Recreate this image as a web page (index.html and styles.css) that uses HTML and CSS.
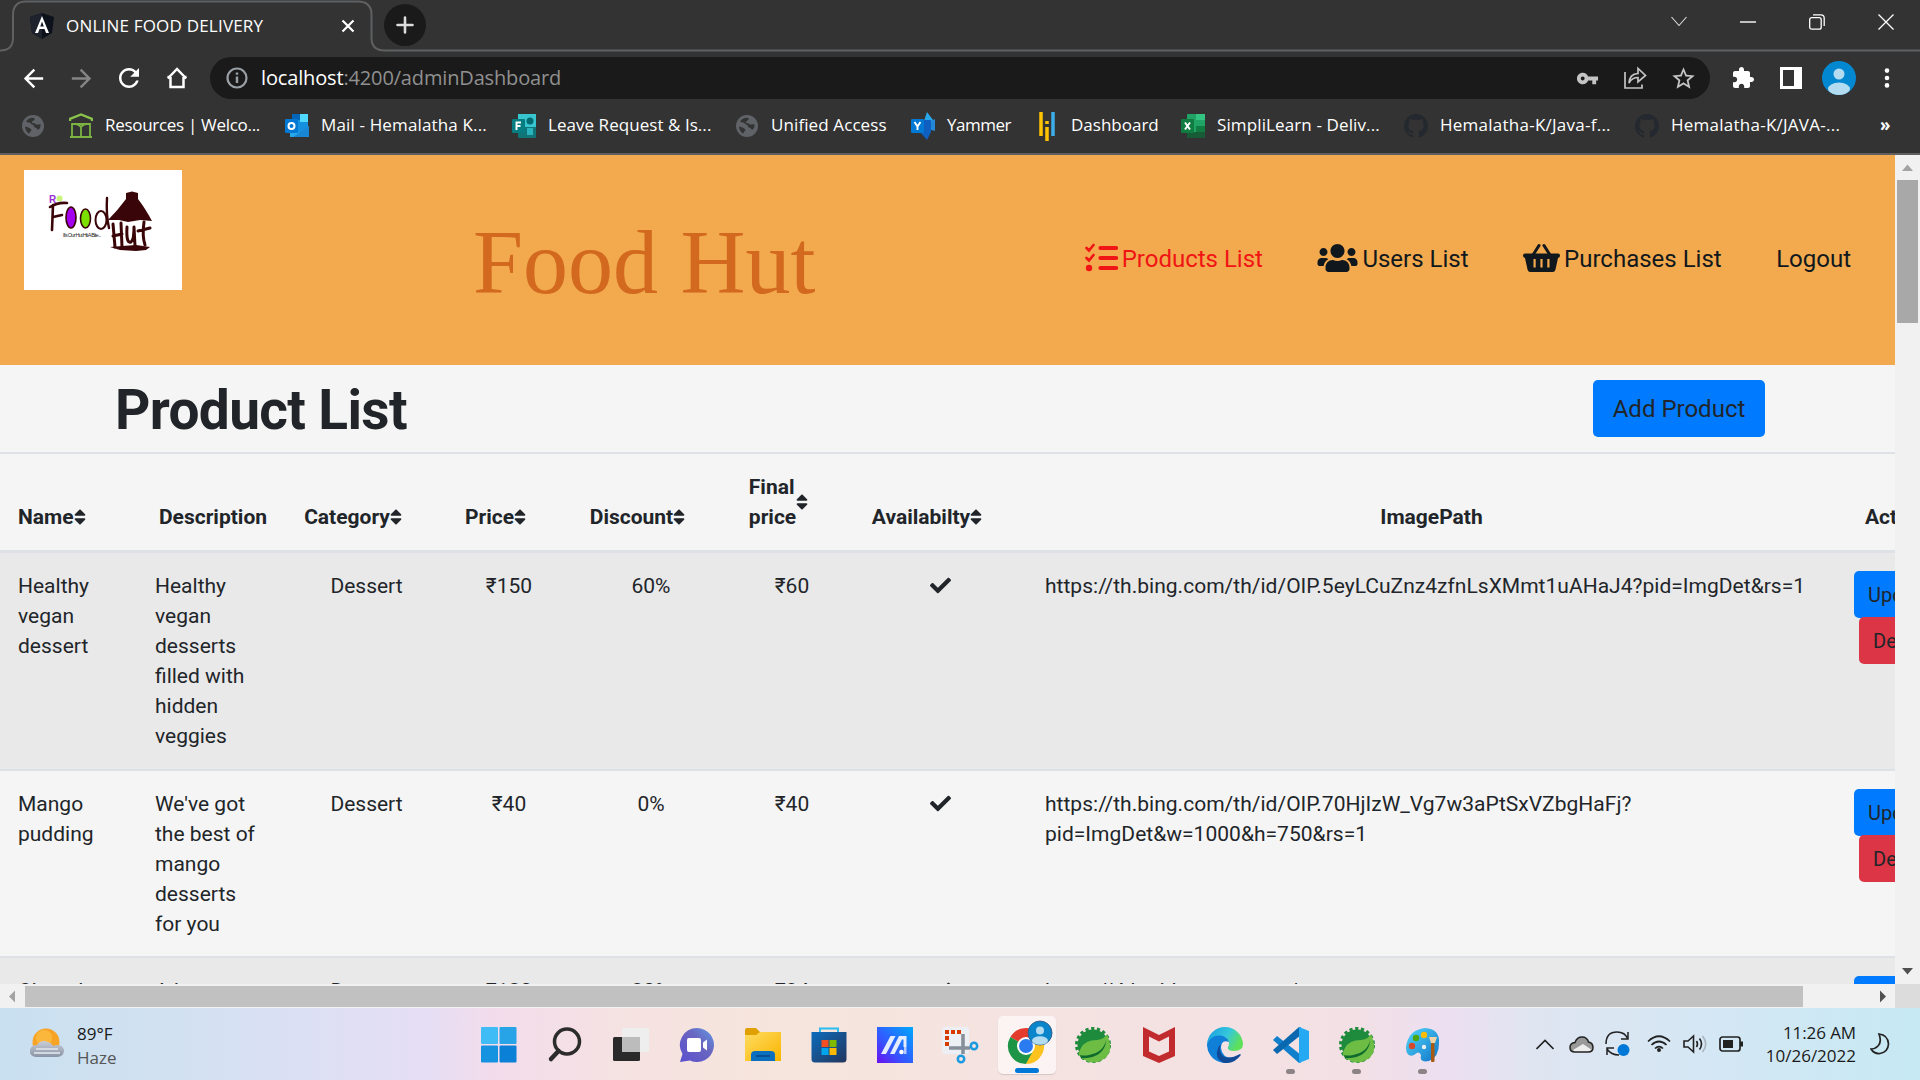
FILE: index.html
```html
<!DOCTYPE html>
<html lang="en">
<head>
<meta charset="utf-8">
<title>ONLINE FOOD DELIVERY</title>
<link rel="stylesheet" href="styles.css">
</head>
<body>
<svg class="defs" width="0" height="0">
  <defs>
    <symbol id="sort" viewBox="0 0 320 512"><path d="M41 288h238c21.4 0 32.1 25.9 17 41L177 448c-9.4 9.4-24.6 9.4-33.9 0L24 329c-15.1-15.1-4.4-41 17-41zm255-105L177 64c-9.4-9.4-24.6-9.4-33.9 0L24 183c-15.1 15.1-4.4 41 17 41h238c21.4 0 32.1-25.9 17-41z"/></symbol>
    <symbol id="check" viewBox="0 0 512 512"><path d="M173.898 439.404l-166.4-166.4c-9.997-9.997-9.997-26.206 0-36.204l36.203-36.204c9.997-9.998 26.207-9.998 36.204 0L192 312.69 432.095 72.596c9.997-9.997 26.207-9.997 36.204 0l36.203 36.204c9.997 9.997 9.997 26.206 0 36.204l-294.4 294.401c-9.998 9.997-26.207 9.997-36.204-.001z"/></symbol>
    <symbol id="globe" viewBox="0 0 22 22"><circle cx="11" cy="11" r="11" fill="#5f6368"/><path d="M4 6.500q3.500-4.500 8-3.500q1.500 1.500-.5 2.500q-2 .5-1.500 2.500q3-.5 4 1.500q2 0 4.500-.5q.5 3-1.500 5.500q-2 .5-2.500-1.500q-2.500 0-3-3q-2.500-.5-3.500-2.500q-2 .5-4-1z" fill="#333" /><path d="M3 11.500q4 .5 6 2.500q1 2-1 2.500q0 2-1 2q-3.500-2-4-7z" fill="#333"/></symbol>
    <symbol id="octocat" viewBox="0 0 16 16"><path fill="#24292f" d="M8 0C3.58 0 0 3.580 0 8c0 3.540 2.290 6.530 5.470 7.590.4.070.550-.170.550-.380 0-.190-.010-.820-.010-1.490-2.010.370-2.530-.490-2.690-.940-.090-.230-.480-.940-.820-1.130-.280-.150-.680-.520-.010-.530.630-.010 1.080.580 1.230.820.720 1.210 1.870.870 2.330.660.070-.520.280-.870.510-1.070-1.780-.200-3.640-.890-3.640-3.950 0-.870.310-1.590.820-2.150-.080-.200-.360-1.020.080-2.120 0 0 .670-.210 2.200.820.640-.180 1.320-.270 2-.270s1.360.090 2 .270c1.530-1.040 2.200-.820 2.200-.820.440 1.100.160 1.920.080 2.120.510.560.820 1.270.820 2.150 0 3.070-1.870 3.750-3.650 3.950.290.250.540.730.540 1.480 0 1.070-.010 1.930-.010 2.200 0 .210.150.460.550.380A8.010 8.010 0 0016 8c0-4.420-3.580-8-8-8z"/></symbol>
    <symbol id="spring" viewBox="0 0 36 36">
      <circle cx="18" cy="18" r="15.500" fill="#1e8a3c"/><circle cx="18" cy="18" r="16.500" fill="none" stroke="#1e8a3c" stroke-width="3" stroke-dasharray="3.200 2.600" />
      <path d="M34 13Q38 25 29 32Q18 39 8 32Q1 29 6 21Q10 13 22 13Q30 12 32 7Z" fill="#6dbd45"/>
      <path d="M31 13Q29 25 14 28Q9 29 5 28L6 31Q18 32 25 26Q31 21 31 13Z" fill="#0e6b2d"/>
    </symbol>
    <linearGradient id="gChat" x1="1" y1="0" x2="0" y2="1"><stop offset="0" stop-color="#5f9be8"/><stop offset=".4" stop-color="#6a67c0"/><stop offset="1" stop-color="#5b4fcf"/></linearGradient>
    <linearGradient id="gFold" x1="0" y1="0" x2="1" y2="1"><stop offset="0" stop-color="#ffdc62"/><stop offset="1" stop-color="#f9b400"/></linearGradient>
    <linearGradient id="gStore" x1="0" y1="0" x2="1" y2="1"><stop offset="0" stop-color="#0b6cbd"/><stop offset="1" stop-color="#24365c"/></linearGradient>
    <linearGradient id="gAsus" x1="1" y1="0" x2="0" y2="1"><stop offset="0" stop-color="#00a8ff"/><stop offset=".6" stop-color="#3456ff"/><stop offset="1" stop-color="#6a10ee"/></linearGradient>
    <linearGradient id="gEdge" x1="0" y1="0" x2="1" y2=".4"><stop offset="0" stop-color="#189be0"/><stop offset=".6" stop-color="#35c8dc"/><stop offset="1" stop-color="#5fe05a"/></linearGradient>
    <linearGradient id="gPaint" x1="0" y1="0" x2="1" y2="1"><stop offset="0" stop-color="#55d8fa"/><stop offset="1" stop-color="#0f74c8"/></linearGradient>
    <linearGradient id="gCloud" x1="0" y1="0" x2="0" y2="1"><stop offset="0" stop-color="#c9ced8"/><stop offset="1" stop-color="#8a93a5"/></linearGradient>
  </defs>
</svg>

<div class="screen">
  <header class="browser">
    <div class="tabstrip">
      <svg class="tab-outline" width="1920" height="52" fill="none" stroke="#5f6062" stroke-width="2"><path d="M0 50.500Q13 50.500 13 38V15Q13 1.500 26 1.500H358Q371.500 1.500 371.500 15V38Q371.500 50.500 385 50.500H1920"/></svg>
      <div class="tab">
        <svg width="24" height="26" viewBox="0 0 24 26"><path d="M12 0L24 4L22 20L12 26L2 20L0 4Z" fill="#0c111b"/><path d="M12 0L0 4L2 20L12 26Z" fill="#1d222c"/><path d="M12 3L5 20H8L9.500 16H14.500L16 20H19ZM12 8.500L13.800 13.500H10.200Z" fill="#fff" fill-rule="evenodd"/></svg>
        <span class="tab-title">ONLINE FOOD DELIVERY</span>
        <svg class="tab-close" width="14" height="14" stroke="#fff" stroke-width="2.200"><path d="M1.500 1.500L12.500 12.500M12.500 1.500L1.500 12.500"/></svg>
      </div>
      <div class="new-tab"><svg width="18" height="18" stroke="#dcdcdc" stroke-width="2.600" stroke-linecap="round"><path d="M9 1.500V16.500M1.500 9H16.500"/></svg></div>
      <div class="window-controls">
        <span><svg width="16" height="12" fill="none" stroke="#ddd" stroke-width="1.100"><path d="M.5 1L8 9.500L15.500 1"/></svg></span>
        <span><svg width="16" height="4" stroke="#fff" stroke-width="1.400"><path d="M0 2H16"/></svg></span>
        <span><svg width="16" height="16" fill="none" stroke="#fff" stroke-width="1.300"><rect x=".7" y="3.700" width="11.500" height="11.500" rx="2"/><path d="M4 .8H12Q15.200.8 15.200 4V12"/></svg></span>
        <span><svg width="16" height="16" stroke="#fff" stroke-width="1.300"><path d="M.5.5L15.500 15.500M15.500.5L.5 15.500"/></svg></span>
      </div>
    </div>

    <div class="toolbar">
      <span class="tool"><svg width="29" height="29" viewBox="0 0 24 24" fill="#fff"><path d="M20 11H7.830l5.590-5.590L12 4l-8 8 8 8 1.410-1.410L7.830 13H20v-2z"/></svg></span>
      <span class="tool"><svg class="flip" width="29" height="29" viewBox="0 0 24 24" fill="#858585"><path d="M20 11H7.830l5.590-5.590L12 4l-8 8 8 8 1.410-1.410L7.830 13H20v-2z"/></svg></span>
      <span class="tool"><svg width="30" height="30" viewBox="0 0 24 24" fill="#fff"><path d="M17.650 6.350C16.200 4.900 14.210 4 12 4c-4.420 0-7.990 3.580-7.990 8s3.570 8 7.990 8c3.730 0 6.840-2.550 7.730-6h-2.080c-.820 2.330-3.040 4-5.650 4-3.310 0-6-2.690-6-6s2.690-6 6-6c1.660 0 3.140.690 4.220 1.780L13 11h7V4l-2.350 2.350z"/></svg></span>
      <span class="tool"><svg width="24" height="24" viewBox="0 0 24 24" fill="none" stroke="#fff" stroke-width="2.500"><path d="M5.500 11V21H18.500V11M2.800 12.500L12 3L21.200 12.500M5.500 11H2.500M18.500 11H21.500"/></svg></span>
      <div class="omnibox">
        <span class="tool"><svg width="22" height="22" fill="none" stroke="#9aa0a6" stroke-width="2.200"><circle cx="11" cy="11" r="9.500"/><path d="M11 9.500V16M11 5.500V7.800" stroke-width="2.400"/></svg></span>
        <span class="url"><b>localhost</b>:4200/adminDashboard</span>
        <span class="tool"><svg width="23" height="23" viewBox="0 0 24 24" fill="#c4c4c4"><path d="M12.650 10C11.830 7.670 9.610 6 7 6c-3.310 0-6 2.690-6 6s2.690 6 6 6c2.610 0 4.830-1.670 5.650-4H17v4h4v-4h2v-4H12.650zM7 14c-1.100 0-2-.9-2-2s.9-2 2-2 2 .9 2 2-.9 2-2 2z"/></svg></span>
        <span class="tool"><svg width="24" height="24" fill="none" stroke="#c4c4c4" stroke-width="1.700"><path d="M2 6V22H19V18.500M6 17Q6.500 8 15 7.500V2.500L22.500 9.500L15 16V11.500Q9 11.500 6 17Z"/></svg></span>
        <span class="tool"><svg width="27" height="27" viewBox="0 0 24 24" fill="#c4c4c4"><path d="M22 9.240l-7.190-.620L12 2 9.190 8.630 2 9.240l5.460 4.730L5.820 21 12 17.270 18.180 21l-1.630-7.030L22 9.240zM12 15.400l-3.760 2.270 1-4.280-3.320-2.880 4.380-.380L12 6.100l1.710 4.040 4.380.380-3.320 2.880 1 4.280L12 15.400z"/></svg></span>
      </div>
      <span class="tool"><svg width="24" height="24" viewBox="0 0 24 24" fill="#fff"><path d="M20.500 11H19V7c0-1.100-.9-2-2-2h-4V3.500C13 2.120 11.880 1 10.500 1S8 2.120 8 3.500V5H4c-1.100 0-1.990.9-1.990 2v3.800H3.500c1.490 0 2.700 1.210 2.700 2.700s-1.210 2.700-2.700 2.700H2V20c0 1.100.9 2 2 2h3.800v-1.500c0-1.490 1.210-2.700 2.700-2.700 1.490 0 2.700 1.210 2.700 2.700V22H17c1.100 0 2-.9 2-2v-4h1.500c1.380 0 2.500-1.120 2.500-2.500S21.880 11 20.500 11z"/></svg></span>
      <span class="tool"><svg width="22" height="22"><path fill="#fff" fill-rule="evenodd" d="M0 0H22V22H0ZM3 3V19H14V3Z"/></svg></span>
      <span class="tool"><svg width="34" height="34"><clipPath id="av"><circle cx="17" cy="17" r="17"/></clipPath><g clip-path="url(#av)"><rect width="34" height="34" fill="#0288d1"/><circle cx="17" cy="13" r="5.500" fill="#b3dcf0"/><ellipse cx="17" cy="28" rx="11" ry="6.500" fill="#b3dcf0"/></g></svg></span>
      <span class="tool"><svg width="6" height="20" fill="#fff"><circle cx="3" cy="2.600" r="2.300"/><circle cx="3" cy="10" r="2.300"/><circle cx="3" cy="17.400" r="2.300"/></svg></span>
    </div>

    <nav class="bookmarks">
      <a><svg width="22" height="22"><use href="#globe"/></svg></a>
      <a><svg width="24" height="26" fill="none" stroke="#8bc34a" stroke-width="2.400"><path d="M1 8V6L12 1.500L23 6V8"/><path d="M3 23.500V11H21V23.500M1 24H23M12 13V24M3 11Q9 10 12 14Q15 10 21 11" stroke="#7cb342" stroke-width="1.800"/></svg><span class="bm bm-resources">Resources | Welco...</span></a>
      <a><svg width="24" height="26"><rect x="7" y="1" width="16" height="23" rx="1" fill="#1490df"/><rect x="15" y="1" width="8" height="8" fill="#50d9ff"/><rect x="7" y="1" width="8" height="6" fill="#0364b8"/><path d="M5 14L14 20L24 13V24H5Z" fill="#28a8ea"/><path d="M24 13V24H8Z" fill="#0f6fc5" opacity=".6"/><rect y="6" width="13" height="14" rx="1" fill="#0078d4"/><circle cx="6.500" cy="13" r="3" fill="none" stroke="#fff" stroke-width="2"/></svg><span class="bm bm-mail">Mail - Hemalatha K...</span></a>
      <a><svg width="24" height="26"><rect x="6" y="1" width="18" height="24" rx="1" fill="#117477"/><rect x="6" y="1" width="18" height="13" fill="#37c6d0"/><circle cx="18" cy="8" r="3.500" fill="#026a70"/><rect x="15" y="15" width="6" height="7" fill="#2bb3bd"/><rect y="6" width="13" height="14" rx="1" fill="#077d81"/><path d="M4.500 17V9.500H9M4.500 13H8.500" fill="none" stroke="#fff" stroke-width="1.900"/></svg><span class="bm bm-leave">Leave Request &amp; Is...</span></a>
      <a><svg width="22" height="22"><use href="#globe"/></svg><span class="bm bm-access">Unified Access</span></a>
      <a><svg width="24" height="28"><path d="M16 0L22 8L18 14L12 12Z" fill="#28a8ea"/><path d="M17 11L24 7V19L17 17Z" fill="#2488d8"/><path d="M10 8H20V20L16 28L8 19Z" fill="#0f5fc0"/><rect y="7" width="13" height="14" rx="1" fill="#0078d4"/><path d="M3.500 10L6.500 14.500L9.500 10M6.500 14V18" fill="none" stroke="#fff" stroke-width="1.900"/></svg><span class="bm bm-yammer">Yammer</span></a>
      <a><svg width="24" height="30"><path d="M4 1V25M10 16V30M10 10V13" stroke="#ffc400" stroke-width="3.500"/><path d="M16 1V25" stroke="#3daee9" stroke-width="3.500"/></svg><span class="bm bm-dash">Dashboard</span></a>
      <a><svg width="24" height="26"><rect x="6" y="1" width="18" height="24" rx="1" fill="#21a366"/><rect x="15" y="1" width="9" height="6" fill="#33c481"/><rect x="15" y="13" width="9" height="6" fill="#107c41"/><rect x="6" y="19" width="18" height="6" fill="#185c37"/><rect y="6" width="13" height="14" rx="1" fill="#107c41"/><path d="M4 9.500L9 16.500M9 9.500L4 16.500" stroke="#fff" stroke-width="2"/></svg><span class="bm bm-simpli">SimpliLearn - Deliv...</span></a>
      <a><svg width="24" height="24"><use href="#octocat"/></svg><span class="bm bm-java">Hemalatha-K/Java-f...</span></a>
      <a><svg width="24" height="24"><use href="#octocat"/></svg><span class="bm bm-java">Hemalatha-K/JAVA-...</span></a>
      <a class="more">»</a>
    </nav>
  </header>

  <div class="viewport">
    <main class="page">
      <div class="site-header">
        <svg class="logo" width="158" height="120" viewBox="0 0 158 120">
          <rect width="158" height="120" fill="#fff"/>
          <text x="25" y="33" font-size="10" fill="#9b30d0" font-weight="bold">R</text><circle cx="35.500" cy="28.500" r="3" fill="#c8f57a"/>
          <g fill="none" stroke="#3a0508" stroke-linecap="round">
            <path d="M29 35L28 60M26 37Q34 32 43 33M29 47L38 45" stroke-width="2.600"/>
            <ellipse cx="47" cy="47.500" rx="5" ry="10.500" fill="#a400f0" stroke-width="1.600"/>
            <ellipse cx="61.500" cy="48.500" rx="5" ry="9.500" fill="#7be000" stroke-width="1.600"/>
            <ellipse cx="77" cy="50" rx="5.500" ry="9" stroke-width="2"/>
            <path d="M83 28Q82 45 85 58" stroke-width="2.400"/>
            <path d="M89 54L91 77M97 53L98 77M89 66L98 64M103 57Q102 74 107 72Q110 70 110 57M110 57L111 76M120 52Q118 66 121 75M114 61L126 58" stroke-width="3"/>
          </g>
          <path d="M102 23L108 21.500L114 23L114 29Q121 38 128 51L116 50L104 52L95 50L84 50Q94 40 102 29Z" fill="#3a0508"/>
          <path d="M86 77L98 76L112 75L126 77L122 80L112 81L96 80Z" fill="#3a0508"/>
          <text x="39" y="67" font-size="5.500" fill="#222" textLength="38">It's Our Hut Hit A Bite...</text>
        </svg>
        <h1 class="brand">Food Hut</h1>
        <nav class="site-nav">
          <a class="active"><svg width="33" height="32" viewBox="0 0 33 32" fill="none" stroke="#f01414"><path d="M15.500 6H31M15.500 16H31M15.500 26H31" stroke-width="4.200" stroke-linecap="round"/><path d="M1.500 6L4 8.500L8.500 3M1.500 16L4 18.500L8.500 13" stroke-width="2.600" stroke-linecap="round"/><circle cx="4" cy="26" r="3.200" fill="#f01414" stroke="none"/></svg>Products List</a>
          <a><svg width="41" height="32" viewBox="0 0 640 512" fill="#11181d"><path d="M96 224c35.300 0 64-28.700 64-64s-28.700-64-64-64-64 28.700-64 64 28.700 64 64 64zm448 0c35.300 0 64-28.700 64-64s-28.700-64-64-64-64 28.700-64 64 28.700 64 64 64zm32 32h-64c-17.600 0-33.500 7.100-45.100 18.600 40.300 22.100 68.900 62 75.100 109.400h66c17.700 0 32-14.300 32-32v-32c0-35.300-28.700-64-64-64zm-256 0c61.900 0 112-50.100 112-112S381.900 32 320 32 208 82.100 208 144s50.100 112 112 112zm76.800 32h-8.300c-20.800 10-43.900 16-68.500 16s-47.600-6-68.500-16h-8.300C179.600 288 128 339.600 128 403.200V432c0 26.500 21.500 48 48 48h288c26.500 0 48-21.500 48-48v-28.800c0-63.600-51.600-115.200-115.200-115.200zm-223.700-13.400C161.500 263.100 145.600 256 128 256H64c-35.300 0-64 28.700-64 64v32c0 17.700 14.300 32 32 32h65.900c6.300-47.400 34.900-87.300 75.200-109.400z"/></svg>Users List</a>
          <a><svg width="37" height="32" viewBox="0 0 37 32"><path d="M10 13L16 3.500M27 13L21 3.500" stroke="#11181d" stroke-width="3" stroke-linecap="round"/><path fill="#11181d" fill-rule="evenodd" d="M2 11.500H35Q37 11.500 37 13.500T35 16L32.500 27.500Q32 30 29.500 30H7.500Q5 30 4.500 27.500L2 16Q0 15.500 0 13.500T2 11.500ZM10.500 17V25.500H12.700V17ZM17.400 17V25.500H19.600V17ZM24.300 17V25.500H26.500V17Z"/></svg>Purchases List</a>
          <a class="logout">Logout</a>
        </nav>
      </div>

      <div class="list-head">
        <h2>Product List</h2>
        <button class="btn btn-add">Add Product</button>
      </div>

      <table class="products">
        <colgroup><col class="c-name"><col class="c-desc"><col class="c-cat"><col class="c-price"><col class="c-disc"><col class="c-final"><col class="c-avail"><col class="c-path"><col class="c-act"></colgroup>
        <thead>
          <tr>
            <th class="left">Name<svg class="sort"><use href="#sort"/></svg></th>
            <th class="desc">Description</th>
            <th>Category<svg class="sort"><use href="#sort"/></svg></th>
            <th>Price<svg class="sort"><use href="#sort"/></svg></th>
            <th>Discount<svg class="sort"><use href="#sort"/></svg></th>
            <th><span class="final"><span>Final<br>price</span><svg class="sort"><use href="#sort"/></svg></span></th>
            <th>Availabilty<svg class="sort"><use href="#sort"/></svg></th>
            <th class="path-head">ImagePath</th>
            <th class="left act-head">Actions</th>
          </tr>
        </thead>
        <tbody>
          <tr class="odd r1">
            <td class="left">Healthy vegan dessert</td><td class="left about">Healthy vegan desserts filled with hidden veggies</td><td>Dessert</td><td>₹150</td><td>60%</td><td>₹60</td>
            <td><svg class="check"><use href="#check"/></svg></td>
            <td class="path">https://th.bing.com/th/id/OIP.5eyLCuZnz4zfnLsXMmt1uAHaJ4?pid=ImgDet&amp;rs=1</td>
            <td class="actions"><button class="btn btn-update">Update</button><button class="btn btn-delete">Delete</button></td>
          </tr>
          <tr class="r2">
            <td class="left">Mango pudding</td><td class="left about">We've got the best of mango desserts for you</td><td>Dessert</td><td>₹40</td><td>0%</td><td>₹40</td>
            <td><svg class="check"><use href="#check"/></svg></td>
            <td class="path">https://th.bing.com/th/id/OIP.70HjIzW_Vg7w3aPtSxVZbgHaFj?<wbr>pid=ImgDet&amp;w=1000&amp;h=750&amp;rs=1</td>
            <td class="actions"><button class="btn btn-update">Update</button><button class="btn btn-delete">Delete</button></td>
          </tr>
          <tr class="odd r3">
            <td class="left">Chocolate</td><td class="left about">A bar</td><td>Dessert</td><td>₹120</td><td>30%</td><td>₹84</td>
            <td><svg class="check"><use href="#check"/></svg></td>
            <td class="path">https://4.bp.blogspot.com/-</td>
            <td class="actions"><button class="btn btn-update">Update</button><button class="btn btn-delete">Delete</button></td>
          </tr>
        </tbody>
      </table>
    </main>
    <div class="vscroll">
      <svg width="25" height="25"><path d="M7 16L12.500 9.500L18 16Z" fill="#a3a3a3"/></svg>
      <div class="vthumb"></div>
      <svg width="25" height="25"><path d="M7 9L12.500 15.500L18 9Z" fill="#505050"/></svg>
    </div>
    <div class="hscroll">
      <svg width="25" height="24"><path d="M15 6.500L9 12.500L15 18.500Z" fill="#a3a3a3"/></svg>
      <div class="hthumb"></div>
      <svg width="25" height="24"><path d="M10 6.500L16 12.500L10 18.500Z" fill="#505050"/></svg>
    </div>
    <div class="corner"></div>
  </div>

  <footer class="taskbar">
    <div class="weather">
      <svg width="36" height="36"><circle cx="17" cy="16" r="13.500" fill="#f7a325"/><circle cx="15" cy="12" r="8" fill="#fbb73c"/><path d="M7 31Q0 30 1 24Q2 19 8 19Q12 13 19 16Q23 17 24 20Q33 17 35 24Q35 31 28 31Z" fill="url(#gCloud)"/><path d="M7 23H29M5 27H31" stroke="#e4e8ee" stroke-width="1.500"/></svg>
      <div class="weather-text"><div>89°F</div><div class="haze">Haze</div></div>
    </div>
    <div class="apps">
      <span><svg width="36" height="36"><rect x="0" y="0" width="17" height="17" rx="1" fill="#3fbcf5"/><rect x="18.500" y="0" width="17" height="17" rx="1" fill="#27a3e8"/><rect x="0" y="18.500" width="17" height="17" rx="1" fill="#1592e0"/><rect x="18.500" y="18.500" width="17" height="17" rx="1" fill="#0a80d6"/></svg></span>
      <span><svg width="36" height="36" fill="none" stroke="#2c2c2c" stroke-linecap="round"><circle cx="20" cy="14.500" r="12.500" stroke-width="3.500"/><path d="M11.500 24L4 32" stroke-width="4.500"/></svg></span>
      <span><svg width="36" height="36"><rect x="0" y="10" width="27" height="24" rx="1.500" fill="#2a2a2a"/><rect x="9" y="1" width="27" height="24" rx="1.500" fill="#eeeeee"/><path d="M9 10H27V25H9Z" fill="#bcbcbc"/></svg></span>
      <span><svg width="36" height="36"><path d="M18 1A17 17 0 1 1 11 33.500L1 35L3.500 27A17 17 0 0 1 18 1Z" fill="url(#gChat)"/><rect x="8" y="11" width="14" height="14" rx="2" fill="#fff"/><path d="M24 15.500L28 12.500V23.500L24 20.500Z" fill="#fff"/></svg></span>
      <span><svg width="36" height="36"><path d="M0 3Q0 1 2 1H11L15 5H34Q36 5 36 7V14H0Z" fill="#e0a000"/><path d="M0 8H11L15 5H36V34H0Z" fill="url(#gFold)"/><path d="M6 34V28Q6 24 10 24H26Q30 24 30 28V34Z" fill="#0b6fc0"/><path d="M11 29H25" stroke="#084f92" stroke-width="2"/></svg></span>
      <span><svg width="36" height="36"><path d="M9 7V1.500H27V7" fill="none" stroke="#2bbcf2" stroke-width="2"/><path d="M.5 5H35.500V32Q35.500 35.500 32 35.500H4Q.5 35.500.5 32Z" fill="url(#gStore)"/><path d="M10.500 13H17.500V20H10.500Z" fill="#f25022"/><path d="M18.500 13H25.500V20H18.500Z" fill="#7fba00"/><path d="M10.500 21H17.500V28H10.500Z" fill="#00a4ef"/><path d="M18.500 21H25.500V28H18.500Z" fill="#ffb900"/></svg></span>
      <span><svg width="36" height="36"><rect width="36" height="36" fill="url(#gAsus)"/><path d="M4 27L13.500 9H18.500L9 27ZM13 27L22 9H29.500V20H26.500V12.500H25L17.500 27Z" fill="#e4ecff"/><circle cx="24.500" cy="25" r="2.300" fill="#fff"/><rect x="27" y="20" width="2.500" height="7" fill="#b5c9ff"/></svg></span>
      <span><svg width="38" height="38"><rect x="0" y="1" width="27" height="27" rx="3" fill="#eceff3"/><path d="M5 20V6H21" fill="none" stroke="#d83b01" stroke-width="4" stroke-dasharray="4 2"/><path d="M21 8V28M7 22H28" stroke="#868e99" stroke-width="3.500"/><circle cx="32" cy="20" r="3.200" fill="none" stroke="#1a9ae0" stroke-width="2.500"/><circle cx="19" cy="33" r="3.200" fill="none" stroke="#1a9ae0" stroke-width="2.500"/></svg></span>
      <span class="current"><svg width="46" height="44" viewBox="0 0 46 44"><path d="M19 26L3.400 17A18 18 0 0 1 34.600 17Z" fill="#e33b2e"/><path d="M19 26L3.400 17A18 18 0 0 0 19 44L27 31Z" fill="#1e9446"/><path d="M19 26L34.600 17A18 18 0 0 1 19 44L26 31Z" fill="#fcc31e"/><circle cx="19" cy="26" r="9" fill="#fff"/><circle cx="19" cy="26" r="7" fill="#2b7bf0"/><circle cx="33" cy="13" r="12" fill="#0a85cc" stroke="#35608a" stroke-width="1"/><circle cx="33" cy="10.500" r="4" fill="#b3dcf0"/><ellipse cx="33" cy="20.500" rx="8" ry="4.300" fill="#b3dcf0"/></svg></span>
      <span><svg width="36" height="36"><use href="#spring"/></svg></span>
      <span><svg width="36" height="36"><path d="M2 0L18 8L34 0V29L18 36L2 29ZM8 9.500V24.500L18 29L28 24.500V9.500L18 14.500Z" fill="#c12b2e" fill-rule="evenodd"/></svg></span>
      <span><svg width="36" height="36"><path d="M18 0A18 18 0 0 1 36 17Q36 24 27 24Q20 24 21 20Q24 15 18 10Q8 6 0 17A18 18 0 0 1 18 0Z" fill="url(#gEdge)"/><path d="M0 17Q4 8 13 8.500Q20 9 22 15Q14 12 14 21Q15 32 28 31Q22 38 13 35A18 18 0 0 1 0 17Z" fill="#0f7fd8"/><path d="M14 17Q11 24 16 29Q22 33 33 27Q34 27 33.500 28.500Q27 37 17 36Q9 33 10 25Q11 19 14 17Z" fill="#104a96"/></svg></span>
      <span class="running"><svg width="36" height="36"><path d="M0 13L4 9L28 28V35.500L26 36Z" fill="#1180cc"/><path d="M0 23L4 27L28 8V.5L26 0Z" fill="#0a68b0"/><path d="M26 0L36 4V32L26 36Z" fill="#24a9f2"/></svg></span>
      <span class="running"><svg width="36" height="36"><use href="#spring"/></svg></span>
      <span class="running"><svg width="36" height="36"><path d="M20 1Q35 2 34 16Q34 30 24 34Q14 36 16 28Q14 23 9 28Q1 31 1 20Q3 3 20 1Z" fill="url(#gPaint)"/><circle cx="7" cy="19" r="3.200" fill="#d8482a"/><circle cx="11" cy="11" r="3.200" fill="#4da60c"/><circle cx="19" cy="8" r="3.200" fill="#fbbc04"/><circle cx="19" cy="20" r="2.200" fill="#eee"/><path d="M24 10H32L30 16H26Z" fill="#f2d3a8"/><rect x="26" y="16" width="3.500" height="19" rx="1" fill="#a85a13"/></svg></span>
    </div>
    <div class="tray">
      <span class="t36"><svg width="18" height="11" fill="none" stroke="#222" stroke-width="1.600"><path d="M.5 10L9 1.500L17.500 10"/></svg></span>
      <span class="t36"><svg width="25" height="17"><path d="M6 16Q1 16 1 11.500Q1 7 6 6.500Q8 1 13 1Q18 1 19.500 6Q24 7 24 11.500Q24 16 19 16Z" fill="#999"/><path d="M4 14L14 8L23 14L19 16H6Z" fill="#eee"/><path d="M6 16Q1 16 1 11.500Q1 7 6 6.500Q8 1 13 1Q18 1 19.500 6Q24 7 24 11.500Q24 16 19 16Z" fill="none" stroke="#222" stroke-width="1.500"/></svg></span>
      <span class="t36"><svg width="25" height="26" fill="none" stroke="#222" stroke-width="1.500"><path d="M1 13Q1 1 12 1Q20 1 23 8M23 1V8H16M2 24V17H9M2 18Q6 24 14 24"/><circle cx="18.500" cy="19" r="6" fill="#0078d7" stroke="none"/></svg></span>
      <span class="t48"><svg width="24" height="18" fill="none" stroke="#222" stroke-width="1.700"><path d="M1 6.500Q12-4 23 6.500M4.500 10Q12 3 19.500 10M8 13.500Q12 9.500 16 13.500"/><circle cx="12" cy="15" r="2" fill="#222" stroke="none"/></svg></span>
      <span class="t22"><svg width="25" height="20" fill="none" stroke="#222" stroke-width="1.600"><path d="M1 7V13H5L10.500 18V2L5 7ZM13.500 7Q15.500 10 13.500 13M16.500 4.500Q20.500 10 16.500 15.500"/><path d="M19.500 2Q26 10 19.500 18" stroke="#aab4bd"/></svg></span>
      <span class="t52"><svg width="25" height="16" fill="none" stroke="#222" stroke-width="1.700"><rect x="1" y="1" width="20" height="14" rx="2.500"/><rect x="4" y="4" width="10" height="8" fill="#222" stroke="none"/><path d="M22.500 5.500V10.500" stroke-width="3"/></svg></span>
      <div class="clock"><div class="time">11:26 AM</div><div class="date">10/26/2022</div></div>
      <span class="moon"><svg width="20" height="22" fill="none" stroke="#222" stroke-width="1.700"><path d="M9 1Q12 9 8 13Q5 16 1 16Q4 21 10 20.500Q18 19 18.500 11Q18 2 9 1Z"/></svg></span>
    </div>
  </footer>
</div>
</body>
</html>
```
FILE: styles.css
```css
* { box-sizing: border-box; }
body { margin: 0; overflow: hidden; background: #333; }
.defs { position: absolute; }
.screen { width: 1920px; height: 1080px; display: flex; flex-direction: column; overflow: hidden; }
svg { display: block; flex: none; }

/* Browser chrome */
.browser { height: 155px; flex: none; background: #333; border-bottom: 2px solid #606060; color: #fff; font: 17px/24px "Open Sans", sans-serif; }
.tabstrip { position: relative; height: 52px; display: flex; }
.tab-outline { position: absolute; left: 0; top: 0; }
.tab { width: 359px; margin-left: 13px; padding: 0 17px; height: 51px; display: flex; align-items: center; }
.tab-title { margin-left: 12px; letter-spacing: .2px; white-space: nowrap; }
.tab-close { margin-left: auto; }
.new-tab { width: 42px; height: 42px; margin: 4px 0 0 12px; border-radius: 50%; background: #1a1a1a; display: grid; place-items: center; }
.window-controls { margin-left: auto; display: flex; height: 43px; }
.window-controls span { width: 69px; display: grid; place-items: center; }
.toolbar { height: 52px; display: flex; align-items: center; padding: 0 9px; }
.tool { width: 48px; display: grid; place-items: center; flex: none; }
.flip { transform: scaleX(-1); }
.omnibox { flex: 1; height: 42px; margin: 0 9px; padding: 0 3px; border-radius: 21px; background: #1a1a1a; display: flex; align-items: center; }
.url { flex: 1; font-size: 20px; letter-spacing: -.15px; color: #909090; }
.url b { font-weight: normal; color: #fff; }
.bookmarks { height: 44px; padding-left: 22px; display: grid; grid-template-columns: 47px 216px 227px 224px 175px 126px 144px 223px 231px 245px 30px; align-items: center; }
.bookmarks a { display: flex; align-items: center; gap: 12px; white-space: nowrap; }
.bm { line-height: 22px; padding-bottom: 2px; }
.bm-resources { letter-spacing: -.3px; }
.bm-mail { letter-spacing: .15px; }
.bm-leave { letter-spacing: .05px; }
.bm-access { letter-spacing: .1px; margin-left: 1px; }
.bm-yammer { letter-spacing: -.5px; }
.bm-dash { margin-left: -2px; }
.bm-simpli { letter-spacing: .12px; }
.bm-java { letter-spacing: .25px; }
.more { font-weight: bold; padding-bottom: 2px; }

/* Page viewport with both scrollbars */
.viewport { flex: none; height: 853px; display: grid; grid-template: 829px 24px / 1895px 25px; background: #f5f5f5; }
.page { overflow: hidden; font: 21px/30px Roboto, sans-serif; color: #212529; }
.site-header { height: 210px; background: #f3aa4e; display: flex; padding: 15px 44px 0 24px; }
.logo { font-family: "Liberation Sans", sans-serif; }
.brand { margin: 41px 0 0 291px; font: 90px/104px "Liberation Serif", serif; color: #d2691e; height: 104px; }
.site-nav { margin: 72px 0 0 auto; height: 32px; display: flex; gap: 54.5px; font-size: 24px; line-height: 34px; color: #11181d; }
.site-nav a { display: flex; gap: 4px; white-space: nowrap; }
.site-nav .active { color: #f01414; }
.list-head { height: 87px; padding: 0 130px 0 115px; display: flex; justify-content: space-between; }
.list-head h2 { margin: 12px 0 0; font: bold 55px/66px Roboto, sans-serif; letter-spacing: -.65px; }
.btn { border: 0; border-radius: 5px; font-family: Roboto, sans-serif; color: #212529; padding: 0; }
.btn-add { width: 172px; height: 57px; margin-top: 15px; font-size: 24px; background: #007bff; }

.products { table-layout: fixed; width: 2001px; border-collapse: separate; border-spacing: 0; }
.c-name { width: 137px; } .c-desc { width: 158px; } .c-cat { width: 143px; } .c-price { width: 142px; } .c-disc { width: 142px; }
.c-final { width: 140px; } .c-avail { width: 157px; } .c-path { width: 818px; } .c-act { width: 164px; }
.products th { height: 101px; padding: 0 27px 18px 0; border-top: 2px solid #dee2e6; border-bottom: 3px solid #dee2e6; vertical-align: bottom; text-align: center; white-space: nowrap; font-weight: bold; }
.products td { padding: 18px 0 0; border-bottom: 2px solid #dee2e6; vertical-align: top; text-align: center; }
.products .left { text-align: left; padding-left: 18px; padding-right: 24px; }
.products .about { padding-right: 35px; }
.products .desc { padding: 0 6px 18px 0; }
.products .path-head { padding-right: 0; padding-left: 7px; }
.products .act-head { padding-left: 28px; }
.products .path { text-align: left; padding-left: 26px; white-space: nowrap; letter-spacing: .02px; }
.r2 .path { white-space: normal; }
.odd td { background: #e9e9e9; }
.r1 td { height: 218px; }
.r2 td { height: 187px; }
.r3 td { height: 187px; }
.sort { display: inline-block; width: 12px; height: 20px; vertical-align: -3px; fill: #212529; }
.final { display: inline-flex; align-items: center; text-align: left; }
.check { width: 21px; height: 21px; margin: 4px auto 0; fill: #212529; }
.products .actions { padding: 18px 0 0 17px; }
.actions .btn { display: block; height: 47px; font-size: 20px; padding: 0 14px; }
.btn-update { background: #007bff; }
.btn-delete { background: #dc3545; margin: -1px 0 0 5px; }

.vscroll { background: #f1f1f1; display: flex; flex-direction: column; }
.vthumb { width: 21px; height: 143px; margin: 0 auto auto 2px; background: #a8a8a8; }
.hscroll { background: #f1f1f1; display: flex; }
.hthumb { width: 1778px; height: 21px; margin: 2px auto 0 0; background: #c1c1c1; }
.corner { background: #dcdcdc; }

/* Windows taskbar */
.taskbar { flex: 1; display: flex; font: 17px/24px "Open Sans", sans-serif; color: #1a1a1a; background: linear-gradient(90deg, #c9e0f0 0, #d3e1f2 200px, #e6def4 430px, #f2dcec 490px, #f5e2e2 620px, #f6e5dc 780px, #f5e3e1 1000px, #f3e0e4 1350px, #ecdff2 1450px, #dfe5f1 1530px, #d5e7f4 1700px, #c6e9f3 1920px); }
.weather { width: 466px; padding: 0 0 0 29px; display: flex; gap: 12px; align-items: center; }
.weather-text { padding-top: 3px; }
.haze { color: #555; }
.apps { display: flex; }
.apps span { width: 66px; height: 72px; display: grid; place-items: center; padding-top: 2px; }
.apps .current { width: 58px; height: 58px; margin: 8px 4px 0; padding: 0 0 7px 5px; border-radius: 5px; background: #fff9; box-shadow: 0 1px 1px #0002; }
.current, .running { position: relative; }
.current::after { content: ""; position: absolute; left: 17px; bottom: 1px; width: 24px; height: 5px; border-radius: 3px; background: #0078d7; }
.running::after { content: ""; position: absolute; left: 28px; bottom: 6px; width: 9px; height: 5px; border-radius: 3px; background: #8b8385; }
.tray { margin-left: auto; display: flex; align-items: center; padding-right: 30px; }
.tray span { display: grid; place-items: center; height: 72px; }
.t36 { width: 36px; }
.t48 { width: 48px; }
.t22 { width: 22px; }
.t52 { width: 52px; }
.clock { width: 99px; text-align: right; line-height: 23px; margin-top: -1px; }
.time { letter-spacing: -.1px; }
.moon { width: 20px; margin-left: 14px; }
```
